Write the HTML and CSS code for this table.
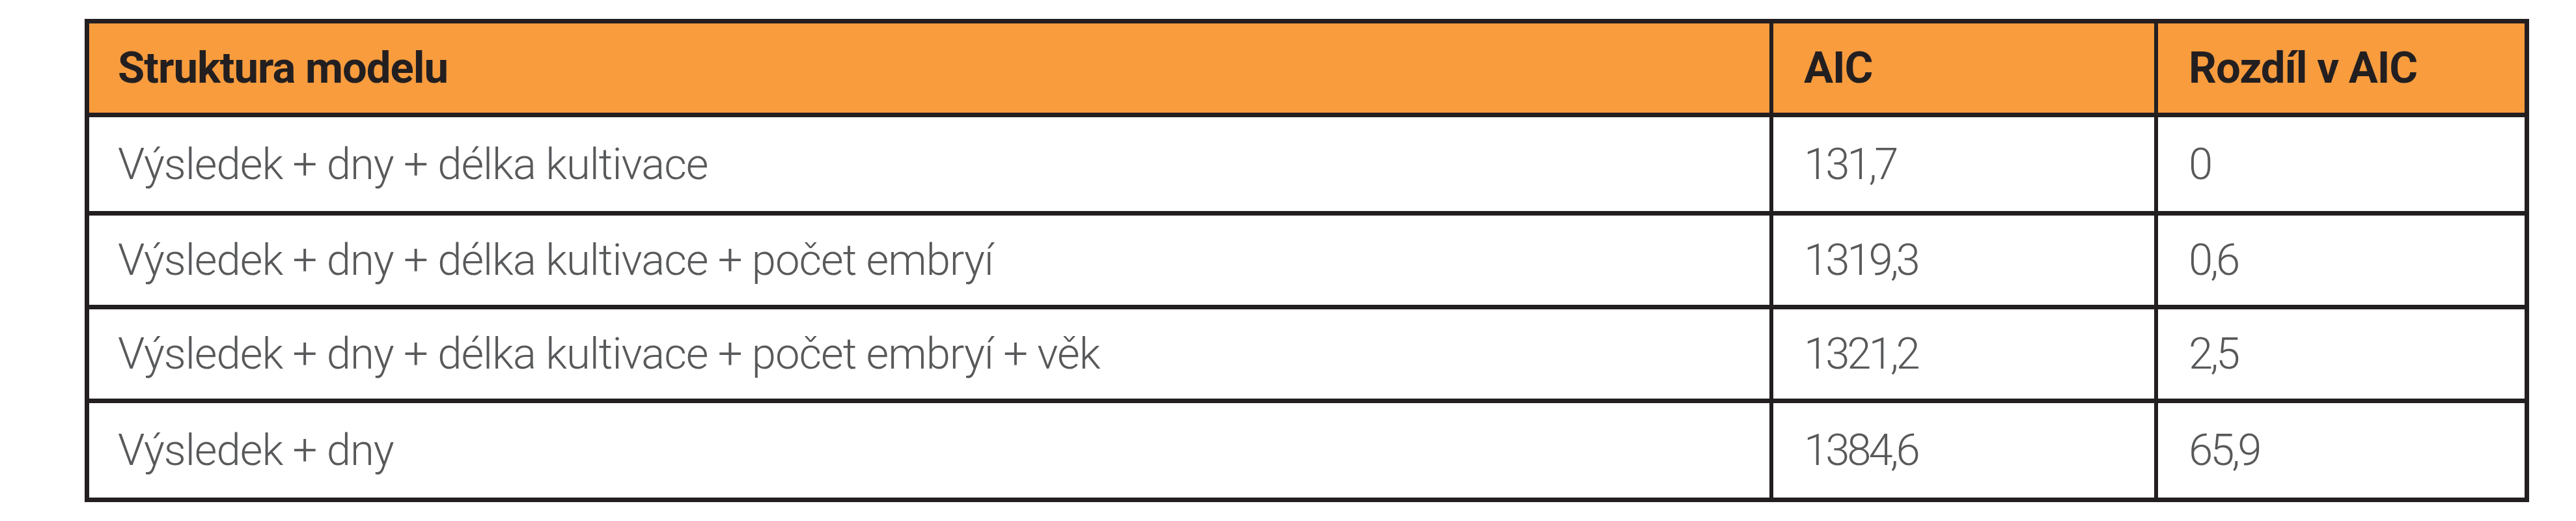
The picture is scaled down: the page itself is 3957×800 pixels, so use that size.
FILE: index.html
```html
<!DOCTYPE html>
<html lang="cs">
<head>
<meta charset="utf-8">
<title>Struktura modelu – AIC</title>
<link rel="stylesheet" href="styles.css">
</head>
<body>
<table class="aic-table">
  <thead>
    <tr class="row-head">
      <th class="col-model">Struktura modelu</th>
      <th class="col-aic">AIC</th>
      <th class="col-diff">Rozdíl v AIC</th>
    </tr>
  </thead>
  <tbody>
    <tr class="row-a">
      <td>Výsledek + dny + délka kultivace</td>
      <td class="num">131,7</td>
      <td class="num">0</td>
    </tr>
    <tr class="row-b">
      <td>Výsledek + dny + délka kultivace + počet embryí</td>
      <td class="num">1319,3</td>
      <td class="num">0,6</td>
    </tr>
    <tr class="row-c">
      <td>Výsledek + dny + délka kultivace + počet embryí + věk</td>
      <td class="num">1321,2</td>
      <td class="num">2,5</td>
    </tr>
    <tr class="row-d">
      <td>Výsledek + dny</td>
      <td class="num">1384,6</td>
      <td class="num">65,9</td>
    </tr>
  </tbody>
</table>
</body>
</html>
```
FILE: styles.css
```css
html, body {
  margin: 0;
  padding: 0;
  background: #ffffff;
}

body {
  padding: 29px 0 0 130px;
  font-family: Roboto, "Liberation Sans", Arial, sans-serif;
}

.aic-table {
  width: 3755px;
  table-layout: fixed;
  border-collapse: separate;
  border-spacing: 0;
  border: 7px solid #231f20;
}

.aic-table th,
.aic-table td {
  box-sizing: border-box;
  padding: 0 0 0 44px;
  text-align: left;
  vertical-align: middle;
  font-size: 67px;
  line-height: 1;
  white-space: nowrap;
  border-right: 6px solid #231f20;
  border-bottom: 7px solid #231f20;
}

.aic-table th:last-child,
.aic-table td:last-child {
  border-right: 0;
}

.aic-table tbody tr:last-child td {
  border-bottom: 0;
}

.aic-table th {
  background: #f89c3e;
  color: #231f20;
  font-weight: 700;
  letter-spacing: -1px;
}

.aic-table td {
  background: #ffffff;
  color: #58595b;
  font-weight: 300;
  letter-spacing: -1px;
}

.aic-table .col-model { width: 2587px; }
.aic-table .col-aic { width: 591px; }
.aic-table .col-diff { width: 563px; }

.aic-table th.col-aic,
.aic-table th.col-diff,
.aic-table td.num {
  padding-left: 47px;
}

.aic-table td.num {
  letter-spacing: -4px;
}

.row-head th { height: 144px; }
.row-a td { height: 151px; }
.row-b td { height: 144px; }
.row-c td { height: 144px; }
.row-d td { height: 145px; }
```
